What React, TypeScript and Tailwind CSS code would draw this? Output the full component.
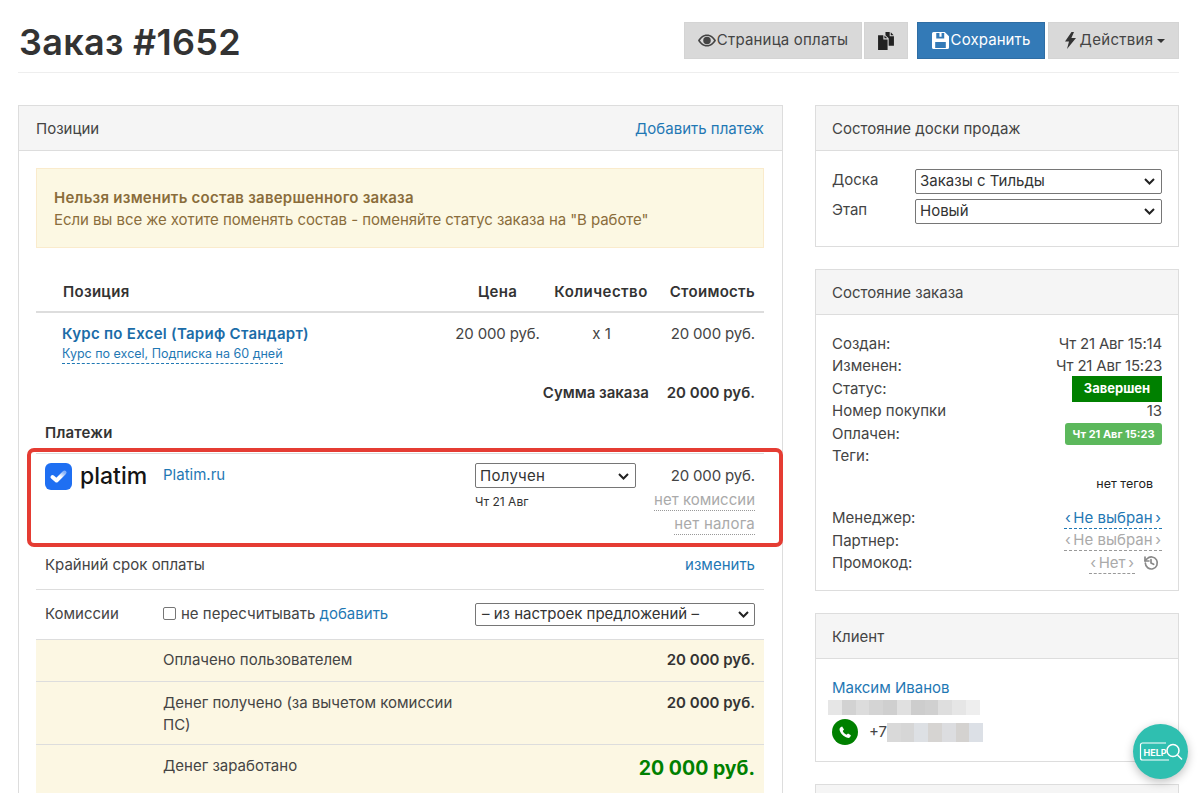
import React from "react";

const F = { fontFamily: "Inter, 'Noto Sans', sans-serif" };

function Eye() {
  return (
    <svg width="18" height="15" viewBox="0 0 24 18" fill="currentColor" aria-hidden="true">
      <path d="M12 1C6.500 1 2.400 4.600 0 9c2.400 4.400 6.500 8 12 8s9.600-3.600 12-8c-2.400-4.400-6.500-8-12-8zm0 14c-4 0-7.400-2.400-9.400-6C4.600 5.400 8 3 12 3s7.400 2.400 9.400 6c-2 3.600-5.400 6-9.400 6z" />
      <circle cx="12" cy="9" r="5" />
    </svg>
  );
}
function Copy() {
  return (
    <svg width="18" height="18" viewBox="0 0 17 17" fill="#222" aria-hidden="true">
      <path d="M1 3h5v4h4v10H1z" />
      <path d="M7 3.200 9.800 6H7z" />
      <path d="M8 0h4v4h4v9h-5V6L8 3z" />
      <path d="M13 .3 15.700 3H13z" />
    </svg>
  );
}
function Save() {
  return (
    <svg width="17" height="17" viewBox="0 0 16 16" fill="#fff" aria-hidden="true">
      <path fillRule="evenodd" d="M1.500 0H12l4 4v10.500a1.500 1.500 0 0 1-1.500 1.500h-13A1.500 1.500 0 0 1 0 14.500v-13A1.500 1.500 0 0 1 1.500 0zM4 1v5h7.500V1H9v3.500H7V1zM3 9.500V15h10V9.500z" />
    </svg>
  );
}
function Bolt() {
  return (
    <svg width="11" height="17" viewBox="0 0 11 17" fill="#333" aria-hidden="true">
      <path d="M6.500 0 0 9.500h4L2 17l9-11H6.400L9 0z" />
    </svg>
  );
}
function Caret() {
  return <span className="inline-block w-0 h-0 border-x-4 border-x-transparent border-t-4 border-t-[#333]" />;
}
function Chevron() {
  return (
    <svg width="11" height="7" viewBox="0 0 11 7" fill="none" stroke="#222" strokeWidth="2" aria-hidden="true">
      <path d="M1 1l4.500 4.500L10 1" />
    </svg>
  );
}
function PlatimLogo() {
  return (
    <div className="flex items-center gap-[8px]">
      <svg width="27" height="27" viewBox="0 0 27 27" aria-hidden="true">
        <defs>
          <linearGradient id="chk" x1="0" y1="1" x2="1" y2="0">
            <stop offset="0.55" stopColor="#fff" />
            <stop offset="1" stopColor="#fff" stopOpacity="0.45" />
          </linearGradient>
        </defs>
        <rect width="27" height="27" rx="6" fill="#1f6ff2" />
        <path d="M7.500 14l4 3.500 8-8" stroke="url(#chk)" strokeWidth="4" fill="none" strokeLinecap="round" strokeLinejoin="round" />
      </svg>
      <span className="text-[23px] leading-none font-medium text-[#151515] -mt-[1px]">platim</span>
    </div>
  );
}

function Btn({ children, className = "" }: { children: React.ReactNode; className?: string }) {
  return (
    <div className={"h-[37px] flex items-center justify-center bg-[#d9d9d9] border border-[#d4d4d4] text-[#444] text-[15px] " + className}>
      {children}
    </div>
  );
}

function Panel({ title, right, children, className = "", wide = false }: { title: string; right?: React.ReactNode; children?: React.ReactNode; className?: string; wide?: boolean }) {
  return (
    <div className={"border border-[#ddd] bg-white " + className}>
      <div className={"h-[45px] bg-[#f5f5f5] border-b border-[#ddd] flex items-center justify-between pr-[18px] pt-[2px] text-[15px] text-[#444] " + (wide ? "pl-[17px]" : "pl-[16px]")}>
        <span>{title}</span>
        {right}
      </div>
      {children}
    </div>
  );
}

function Blur({ colors, w, h }: { colors: string[]; w: string; h: string }) {
  return (
    <span className="inline-flex align-top" style={{ height: h }}>
      {colors.map((c, i) => (
        <span key={i} style={{ background: c, width: w, height: h }} />
      ))}
    </span>
  );
}

function Row({ label, children }: { label: string; children?: React.ReactNode }) {
  return (
    <div className="flex justify-between items-center h-[22.4px] text-[15px] text-[#444]">
      <span>{label}</span>
      {children}
    </div>
  );
}

const link = "text-[#1f78b4]";

export default function App() {
  return (
    <div className="h-[793px] w-[1200px] overflow-hidden bg-white text-[#333] relative" style={F}>
      <div className="pl-[18px] pr-[21px]">
        <div className="h-[73px] flex items-start justify-between border-b border-[#eee] pt-[22px]">
          <h1 className="text-[36px] leading-[40px] font-semibold text-[#333] ml-[1px] tracking-[0.3px]">Заказ #1652</h1>
          <div className="flex">
            <Btn className="w-[178px] gap-[1px]"><Eye /><span className="tracking-[0.2px]">Страница оплаты</span></Btn>
            <Btn className="w-[44px] ml-[2px]"><Copy /></Btn>
            <div className="h-[37px] w-[128px] ml-[9px] flex items-center justify-center gap-[2px] bg-[#337ab7] border border-[#2e6da4] text-white text-[15px]"><Save /><span className="tracking-[0.1px]">Сохранить</span></div>
            <Btn className="w-[131px] ml-[3px] gap-[4px] pl-[3px]"><Bolt /><span className="tracking-[0.3px]">Действия</span><Caret /></Btn>
          </div>
        </div>

        <div className="flex gap-[32px] mt-[32px] items-start">
          <div className="w-[765px] shrink-0 relative">
            <Panel wide title="Позиции" right={<span className={link}>Добавить платеж</span>}>
              <div className="pl-[17px] pr-[18px] pt-[17px]">
                <div className="h-[80px] bg-[#fcf8e3] border border-[#faebcc] px-[17px] pt-[2px] flex flex-col justify-center text-[15px] leading-[22px] text-[#8a6d3b]">
                  <b className="font-semibold tracking-[0.24px]">Нельзя изменить состав завершенного заказа</b>
                  <span className="tracking-[-0.07px]">Если вы все же хотите поменять состав - поменяйте статус заказа на "В работе"</span>
                </div>

                <div className="mt-[22px] h-[43px] pt-[3px] grid grid-cols-[414px_95px_111px_1fr] items-center border-b-2 border-[#ddd] text-[15px] font-semibold text-[#333] tracking-[0.3px]">
                  <span className="pl-[27px]">Позиция</span>
                  <span className="text-center">Цена</span>
                  <span className="text-center pl-[1px] tracking-[0.45px]">Количество</span>
                  <span className="text-right pr-[9px]">Стоимость</span>
                </div>
                <div className="grid grid-cols-[414px_95px_111px_1fr] text-[15px] text-[#444] h-[60px] pt-[10px] leading-[22px]">
                  <div className="pl-[26px]">
                    <div className="font-semibold text-[#1b6ca8] tracking-[0.27px]">Курс по Excel (Тариф Стандарт)</div>
                    <span className={"text-[12.5px] leading-[18px] block w-fit border-b border-dashed border-[#1f78b4] " + link}>Курс по excel, Подписка на 60 дней</span>
                  </div>
                  <span className="text-center tracking-[-0.15px]">20 000 руб.</span>
                  <span className="text-center pl-[2px]">x 1</span>
                  <span className="text-right pr-[9px] tracking-[-0.15px]">20 000 руб.</span>
                </div>
                <div className="flex justify-end gap-[18px] pr-[9px] text-[15px] font-semibold h-[40px] items-center">
                  <span>Сумма заказа</span><span>20 000 руб.</span>
                </div>
                <div className="pl-[9px] h-[32px] flex items-end pb-[1px] text-[15px] font-semibold leading-[22px] tracking-[0.2px]"><span>Платежи</span></div>

                <div className="h-[89px] flex border-t border-[#ddd] mt-[8px] text-[15px] text-[#444] pt-[9px]">
                  <div className="pl-[9px] w-[127px]"><PlatimLogo /></div>
                  <span className={"w-[312px] mt-[1px] " + link}>Platim.ru</span>
                  <div className="w-[161px]">
                    <div className="w-[161px] h-[25px] pt-[1px] border border-[#767676] rounded-[2px] flex items-center justify-between pl-[4px] pr-[6px] text-[#333] tracking-[0.3px]">
                      Получен
                      <Chevron />
                    </div>
                    <div className="text-[12px] mt-[6px] leading-[16px] text-[#333]">Чт 21 Авг</div>
                  </div>
                  <div className="flex-1 flex flex-col items-end pr-[9px] pt-[2px] leading-[22px]">
                    <span className="tracking-[-0.15px]">20 000 руб.</span>
                    <span className="text-[#aaa] border-b border-dotted border-[#999] leading-[21px] mt-[2px]">нет комиссии</span>
                    <span className="text-[#aaa] border-b border-dotted border-[#999] leading-[21px] mt-[2px] tracking-[0.2px]">нет налога</span>
                  </div>
                </div>

                <div className="h-[49px] flex items-center justify-between border-b border-[#ddd] px-[9px] text-[15px] text-[#444] -mt-[1px]">
                  <span>Крайний срок оплаты</span><span className={link}>изменить</span>
                </div>
                <div className="h-[49px] flex items-center pl-[9px] text-[15px] text-[#444]">
                  <span className="w-[118px]">Комиссии</span>
                  <span className="w-[312px] flex items-center">
                    <span className="w-[13px] h-[13px] border border-[#767676] rounded-[2px] mr-[5px] -mt-[3px]" />
                    не пересчитывать&nbsp;<span className={link}>добавить</span>
                  </span>
                  <div className="w-[280px] h-[23px] border border-[#767676] rounded-[2px] flex items-center justify-between pl-[6px] pr-[5px] text-[#333]">
                    – из настроек предложений –
                    <Chevron />
                  </div>
                </div>

                <div className="bg-[#fcf7e3] text-[15px] text-[#444]">
                  <div className="h-[42px] border-t border-[#ddd] flex items-center justify-between pl-[127px] pr-[9px]">
                    <span>Оплачено пользователем</span><b className="font-semibold text-[#333]">20 000 руб.</b>
                  </div>
                  <div className="h-[63px] border-t border-[#ddd] flex justify-between pl-[127px] pr-[9px] pt-[10px] leading-[22px]">
                    <span className="w-[310px]">Денег получено (за вычетом комиссии ПС)</span><b className="font-semibold text-[#333]">20 000 руб.</b>
                  </div>
                  <div className="h-[60px] border-t border-[#ddd] flex justify-between pl-[127px] pr-[9px] pt-[10px] leading-[22px]">
                    <span>Денег заработано</span><b className="text-[19.5px] leading-[26px] font-bold text-[#008000]">20 000 руб.</b>
                  </div>
                </div>
              </div>
            </Panel>
            <div className="absolute left-[9px] top-[343px] w-[756px] h-[99px] border-[4px] border-[#e53c33] rounded-[7px] pointer-events-none" />
          </div>

          <div className="flex-1 min-w-0 flex flex-col gap-[22px]">
            <Panel title="Состояние доски продаж" className="h-[142px]">
              <div className="pl-[16px] pr-[16px] pt-[18px] text-[15px] text-[#444] flex flex-col gap-[5px]">
                {[["Доска", "Заказы с Тильды"], ["Этап", "Новый"]].map(([a, b]) => (
                  <div key={a} className="flex items-center h-[25px]">
                    <span className="w-[83px] -mt-[3px]">{a}</span>
                    <div className="flex-1 h-[25px] border border-[#767676] rounded-[2px] flex items-center justify-between pl-[4px] pr-[6px] text-[#333]">
                      {b}
                      <Chevron />
                    </div>
                  </div>
                ))}
              </div>
            </Panel>

            <Panel title="Состояние заказа" className="h-[322px]">
              <div className="pl-[16px] pr-[16px] pt-[18px]">
                <Row label="Создан:"><span className="tracking-[-0.2px]">Чт 21 Авг 15:14</span></Row>
                <Row label="Изменен:"><span className="tracking-[-0.2px]">Чт 21 Авг 15:23</span></Row>
                <Row label="Статус:"><span className="w-[90px] h-[26px] bg-[#008000] text-white text-[13px] font-bold flex items-center justify-center">Завершен</span></Row>
                <Row label="Номер покупки"><span>13</span></Row>
                <Row label="Оплачен:"><span className="w-[97px] h-[22px] bg-[#5cb85c] rounded-[3px] text-white text-[11px] font-bold flex items-center justify-center">Чт 21 Авг 15:23</span></Row>
                <Row label="Теги:" />
                <div className="h-[40px] flex items-center justify-end pr-[9px] pb-[6px] text-[12.5px] text-[#222]">нет тегов</div>
                <Row label="Менеджер:"><span className={"border-b border-dashed border-[#1f78b4] leading-[20px] px-[1px] " + link}>‹&#8201;Не выбран&#8201;›</span></Row>
                <Row label="Партнер:"><span className="text-[#aaa] border-b border-dashed border-[#999] leading-[20px] px-[1px]">‹&#8201;Не выбран&#8201;›</span></Row>
                <Row label="Промокод:">
                  <span className="flex items-center gap-[8px] pr-[3px]">
                    <span className="text-[#aaa] border-b border-dashed border-[#999] leading-[20px] px-[1px]">‹&#8201;Нет&#8201;›</span>
                    <svg width="16" height="16" viewBox="0 0 24 24" fill="none" stroke="#888" strokeWidth="2.500" strokeLinecap="round" strokeLinejoin="round" aria-hidden="true"><path d="M3 3v6h6" /><path d="M3.500 12a9 9 0 1 0 2.600-6.400L3 9" /><path d="M12 7v5l4 2" /></svg>
                  </span>
                </Row>
              </div>
            </Panel>

            <Panel title="Клиент" className="h-[149px]">
              <div className="pl-[16px] pr-[16px] pt-[18px] text-[15px] text-[#444]">
                <div className={"leading-[22px] " + link}>Максим Иванов</div>
                <div className="-ml-[4px] mt-[1px] h-[15px] flex"><Blur w="13.800px" h="15px" colors={["#e6e6e6", "#d2d2d2", "#dcdcdc", "#d4d4d4", "#cfcfcf", "#e0e0e0", "#cdcdcd", "#d0d0d0", "#dedede", "#e6e6e6", "#eeeeee"]} /></div>
                <div className="flex items-center mt-[4px]">
                  <span className="w-[26px] h-[26px] rounded-full bg-[#008000] flex items-center justify-center">
                    <svg width="15" height="15" viewBox="0 0 24 24" fill="#fff" aria-hidden="true"><path d="M6.600 2.500l3 4.500-2 2.500c1 2.500 3.500 5 6 6l2.500-2 4.500 3c-.5 3-3 5-5.500 4C9 18.500 4 13.500 2.500 8 2 5.500 4 3 6.600 2.500z" /></svg>
                  </span>
                  <span className="ml-[11px]">+7</span>
                  <span className="flex"><Blur w="13.700px" h="19px" colors={["#d9d9d9", "#d6d6d6", "#dde0e4", "#d6d4d2", "#dcdde0", "#d4d2d0", "#dce0e6"]} /></span>
                </div>
              </div>
            </Panel>

            <Panel title="" className="h-[60px]" />
          </div>
        </div>
      </div>

      <div className="absolute left-[1133px] top-[724px] w-[55px] h-[55px] rounded-full bg-[#2fbfb0] shadow-[0_3px_10px_rgba(0,0,0,0.25)] flex items-center justify-center">
        <svg width="44" height="26" viewBox="0 0 44 26" fill="none" stroke="#fff" aria-hidden="true">
          <path d="M27 4H3.500a2 2 0 0 0-2 2v13a2 2 0 0 0 2 2H30" strokeWidth="1.200" />
          <text x="4.500" y="16.500" fill="#fff" stroke="none" fontSize="9" fontWeight="700" fontFamily="Inter, sans-serif">HELP</text>
          <circle cx="34" cy="11.500" r="6" strokeWidth="1.500" />
          <path d="M38.500 16l4.500 4.500" strokeWidth="1.500" />
        </svg>
      </div>
    </div>
  );
}
